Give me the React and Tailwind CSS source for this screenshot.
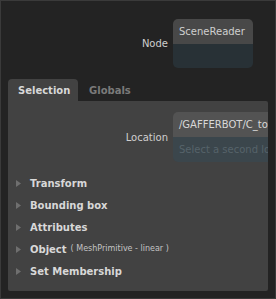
const sections = [
  { name: 'Transform' },
  { name: 'Bounding box' },
  { name: 'Attributes' },
  { name: 'Object', note: '( MeshPrimitive - linear )' },
  { name: 'Set Membership' },
];

const Arrow = () => (
  <svg width="6" height="7" viewBox="0 0 6 7" className="shrink-0">
    <path d="M0 0 L5 3.5 L0 7 Z" fill="#6f6f6f" />
  </svg>
);

export default function App() {
  return (
    <div
      className="w-[276px] h-[299px] bg-[#232323] border border-[#3a3a3a] flex flex-col text-[10px] text-[#cfcfcf] overflow-hidden"
      style={{ fontFamily: '"DejaVu Sans", sans-serif' }}
    >
      {/* Node */}
      <div className="flex items-center mt-[18px] ml-[7px]">
        <div className="w-[165px] pr-[5px] text-right">Node</div>
        <div className="w-[80px] h-[49px] rounded-[5px] overflow-hidden flex flex-col">
          <div className="h-[25px] bg-[#484848] px-[6px] flex items-center">SceneReader</div>
          <div className="flex-1 bg-[#283136]"></div>
        </div>
      </div>

      {/* Tabs */}
      <div className="flex items-end mt-[11px] ml-[7px] h-[22px]">
        <div className="w-[70px] h-[22px] bg-[#424242] rounded-t-[4px] px-[10px] flex items-center font-bold text-[#d8d8d8]">
          Selection
        </div>
        <div className="h-[22px] pl-[11px] flex items-center font-bold text-[#7a7a7a]">Globals</div>
      </div>

      {/* Panel */}
      <div className="mx-[7px] h-[190px] bg-[#424242] rounded-b-[2px] rounded-tr-[2px] overflow-hidden flex flex-col">
        <div className="flex items-center mt-[11px]">
          <div className="w-[165px] shrink-0 pr-[5px] text-right">Location</div>
          <div className="w-[140px] shrink-0 h-[50px] rounded-[5px] overflow-hidden flex flex-col">
            <div className="h-[25px] bg-[#535353] px-[6px] flex items-center whitespace-nowrap text-[#d8d8d8]">
              /GAFFERBOT/C_torso_GRP
            </div>
            <div className="flex-1 bg-[#3b464c] px-[6px] flex items-center whitespace-nowrap text-[#56636a]">
              Select a second location
            </div>
          </div>
        </div>

        <div className="mt-[10px] flex flex-col">
          {sections.map((s) => (
            <div key={s.name} className="h-[22px] flex items-center pl-[8px]">
              <Arrow />
              <span className="ml-[8px] font-bold text-[#d8d8d8]">{s.name}</span>
              {s.note && <span className="ml-[4px] text-[8px] text-[#c4c4c4]">{s.note}</span>}
            </div>
          ))}
        </div>
      </div>
    </div>
  );
}
